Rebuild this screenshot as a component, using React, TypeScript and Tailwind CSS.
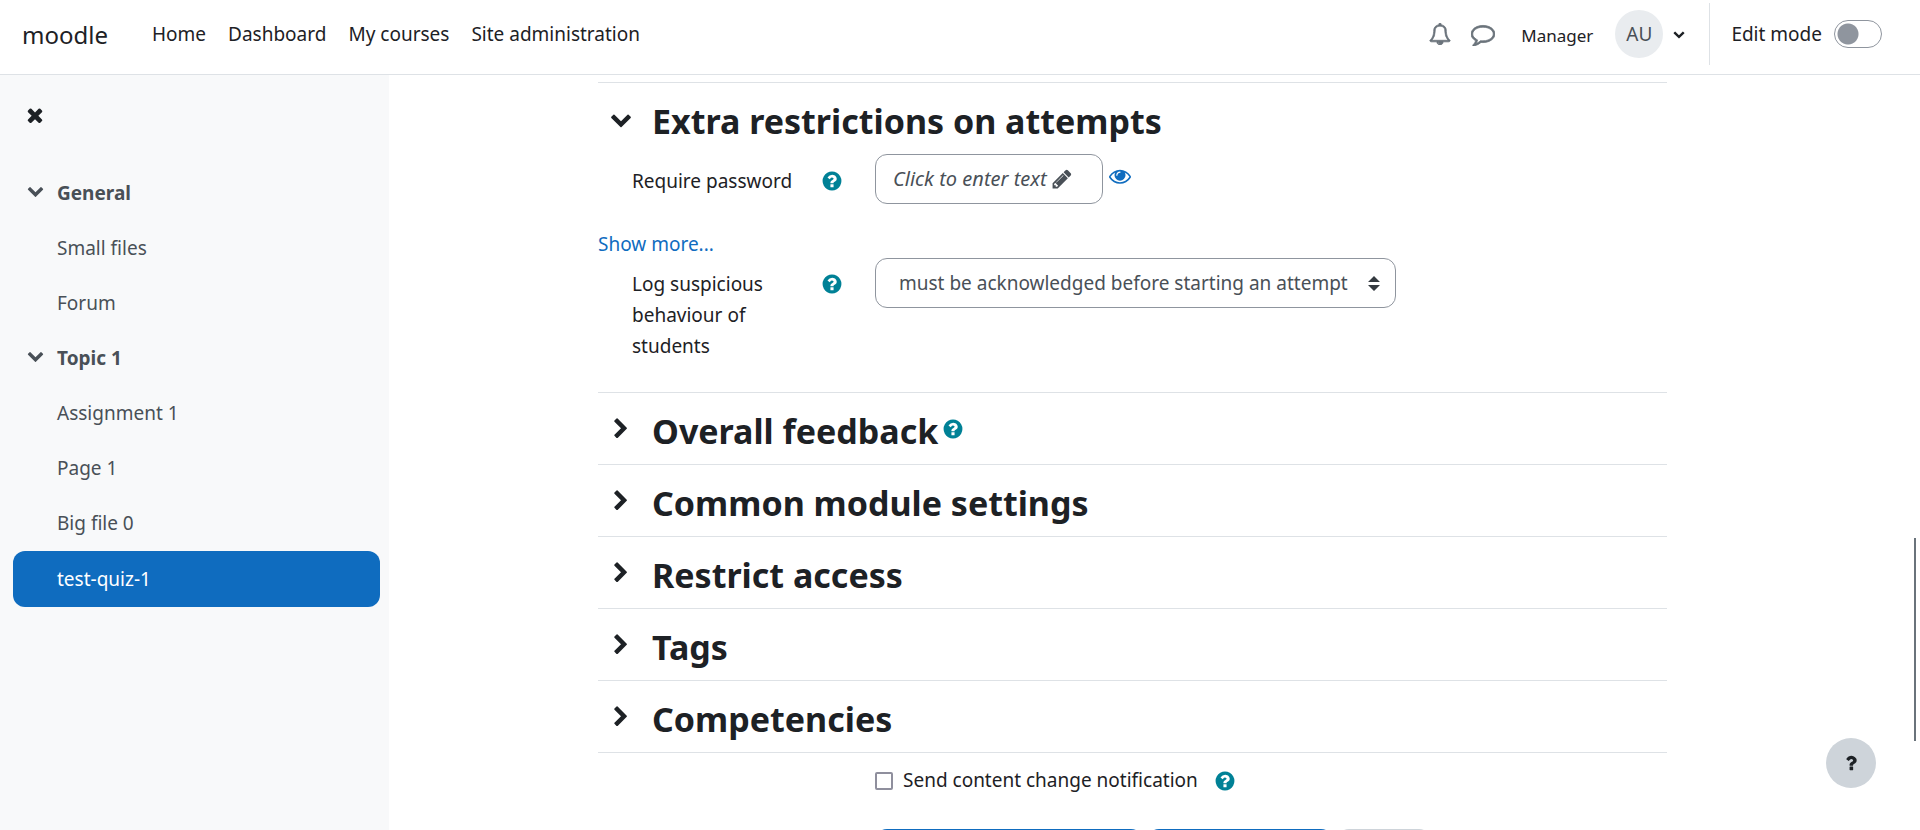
import type { ReactNode } from "react";

const PATHS = {
  chevronDown:
    "M1683 808l-742 741q-19 19-45 19t-45-19l-742-741q-19-19-19-45.5t19-45.5l166-165q19-19 45-19t45 19l531 531 531-531q19-19 45-19t45 19l166 165q19 19 19 45.5t-19 45.5z",
  chevronRight:
    "M1363 877l-742 742q-19 19-45 19t-45-19l-166-166q-19-19-19-45t19-45l531-531-531-531q-19-19-19-45t19-45l166-166q19-19 45-19t45 19l742 742q19 19 19 45t-19 45z",
  help: "M1024 1376v-192q0-14-9-23t-23-9h-192q-14 0-23 9t-9 23v192q0 14 9 23t23 9h192q14 0 23-9t9-23zm256-672q0-88-55.5-163t-138.5-116-170-41q-243 0-371 213-15 24 8 42l132 100q7 6 19 6 16 0 25-12 53-68 86-92 34-24 86-24 48 0 85.5 26t37.5 59q0 38-20 61t-68 45q-63 28-115.5 86.5t-52.5 125.5v36q0 14 9 23t23 9h192q14 0 23-9t9-23q0-19 21.5-49.5t54.5-49.5q32-18 49-28.5t46-35 44.5-48 28-60.5 12.5-81zm384 192q0 209-103 385.5t-279.5 279.5-385.5 103-385.5-103-279.5-279.5-103-385.5 103-385.5 279.5-279.5 385.5-103 385.5 103 279.5 279.5 103 385.5z",
  times:
    "M1490 1322q0 40-28 68l-136 136q-28 28-68 28t-68-28l-294-294-294 294q-28 28-68 28t-68-28l-136-136q-28-28-28-68t28-68l294-294-294-294q-28-28-28-68t28-68l136-136q28-28 68-28t68 28l294 294 294-294q28-28 68-28t68 28l136 136q28 28 28 68t-28 68l-294 294 294 294q28 28 28 68z",
  eye: "M1664 960q-152-236-381-353 61 104 61 225 0 185-131.5 316.5t-316.5 131.5-316.5-131.5-131.5-316.5q0-121 61-225-229 117-381 353 133 205 333.5 326.5t434.5 121.5 434.5-121.5 333.5-326.5zm-720-384q0-20-14-34t-34-14q-125 0-214.5 89.5t-89.5 214.5q0 20 14 34t34 14 34-14 14-34q0-86 61-147t147-61q20 0 34-14t14-34zm848 384q0 34-20 69-140 230-376.5 368.5t-499.5 138.5-499.5-139-376.5-368q-20-35-20-69t20-69q140-229 376.5-368t499.5-139 499.5 139 376.5 368q20 35 20 69z",
  pencil:
    "M491 1536l91-91-235-235-91 91v107h128v128h107zm523-928q0-22-22-22-10 0-17 7l-542 542q-7 7-7 17 0 22 22 22 10 0 17-7l542-542q7-7 7-17zm-54-192l416 416-832 832h-416v-416zm683 96q0 53-37 90l-166 166-416-416 166-165q36-38 90-38 53 0 91 38l235 234q37 39 37 91z",
  bell: "M912 1696q0-16-16-16-59 0-101.5-42.5t-42.5-101.5q0-16-16-16t-16 16q0 73 51.5 124.5t124.5 51.5q16 0 16-16zm-666-288h1300q-266-300-266-832 0-51-24-105t-69-103-121.5-80.5-169.5-31.5-169.5 31.5-121.5 80.5-69 103-24 105q0 532-266 832zm1482 0q0 52-38 90t-90 38h-448q0 106-75 181t-181 75-181-75-75-181h-448q-52 0-90-38t-38-90q50-42 91-88t85-119.5 74.5-158.5 50-206 19.5-260q0-152 117-282.5t307-158.5q-8-19-8-39 0-40 28-68t68-28 68 28 28 68q0 20-8 39 190 28 307 158.5t117 282.5q0 139 19.5 260t50 206 74.5 158.5 85 119.5 91 88z",
  comment:
    "M896 384q-204 0-381.5 69.5t-282 187.5-104.5 255q0 112 71.5 213.5t201.5 175.5l87 50-27 96q-24 91-70 172 152-63 275-171l43-38 57 6q69 8 130 8 204 0 381.5-69.5t282-187.5 104.5-255-104.5-255-282-187.5-381.5-69.5zm896 512q0 174-120 321.5t-326 233-450 85.5q-70 0-145-8-198 175-460 242-49 14-114 22h-5q-15 0-27-10.5t-16-27.5v-1q-3-4-.5-12t2-10 4.5-9.5l6-9 7-8.5 8-9q7-8 31-34.5t34.5-38 31-39.5 32.5-51 27-59 26-76q-157-89-247.5-220t-90.5-281q0-174 120-321.5t326-233 450-85.5 450 85.5 326 233 120 321.5z",
  question:
    "M1088 1256v240q0 16-12 28t-28 12h-240q-16 0-28-12t-12-28v-240q0-16 12-28t28-12h240q16 0 28 12t12 28zm316-600q0 54-15.5 101t-35 76.5-55 59.5-57.5 43.5-61 35.5q-41 23-68.5 65t-27.5 67q0 17-12 32.5t-28 15.5h-240q-15 0-25.5-18.5t-10.5-37.5v-45q0-83 65-156.5t143-108.5q59-27 84-56t25-76q0-42-46.5-74t-107.5-32q-65 0-108 29-35 25-107 115-13 16-31 16-12 0-25-8l-164-125q-13-10-15.5-25t5.5-28q160-266 464-266 80 0 161 31t146 83 106 127.5 41 158.5z",
};

function Icon({ name, className }: { name: keyof typeof PATHS; className: string }) {
  return (
    <svg viewBox="0 0 1792 1792" fill="currentColor" aria-hidden="true" className={`shrink-0 ${className}`}>
      <path d={PATHS[name]} />
    </svg>
  );
}

function Help({ topic }: { topic: string }) {
  return (
    <button type="button" aria-label={`Help with ${topic}`} className="flex shrink-0 text-[#008196]">
      <Icon name="help" className="size-[22px]" />
    </button>
  );
}

function NavGroup({ title, items, current }: { title: string; items: string[]; current?: string }) {
  return (
    <li>
      <button type="button" aria-expanded="true" className="flex h-[55px] w-full items-center font-bold">
        <span className="flex w-11 pb-1.5 pl-[14px]">
          <Icon name="chevronDown" className="size-[17px]" />
        </span>
        {title}
      </button>
      <ul>
        {items.map((item) => (
          <li key={item}>
            <a
              href="#"
              aria-current={item === current ? "page" : undefined}
              className={
                item === current
                  ? "flex h-14 items-center rounded-xl bg-[#0f6cbf] pl-11 text-white"
                  : "flex h-[55px] items-center pl-11"
              }
            >
              {item}
            </a>
          </li>
        ))}
      </ul>
    </li>
  );
}

function Section({ title, open = false, help = false, children }: { title: string; open?: boolean; help?: boolean; children?: ReactNode }) {
  return (
    <section className="border-b border-[#dee2e6]">
      <div className="flex h-[71px] items-center pt-1">
        <button type="button" aria-expanded={open} aria-label={title} className="flex w-[54px] shrink-0 pb-1 pl-3">
          <Icon name={open ? "chevronDown" : "chevronRight"} className="size-[22px]" />
        </button>
        <h3 className="text-[34px] leading-10 font-bold">{title}</h3>
        {help && (
          <span className="pb-1 pl-1">
            <Help topic={title} />
          </span>
        )}
      </div>
      {children}
    </section>
  );
}

export default function App() {
  return (
    <div className="flex h-screen flex-col overflow-hidden bg-white font-['Noto_Sans','Open_Sans',sans-serif] text-[19px] leading-[31px] text-[#1d2125]">
      <header className="flex h-[75px] shrink-0 items-center justify-between border-b border-[#dee2e6] pb-1.5 pl-[22px] pr-[38px]">
        <div className="flex items-center">
          <a href="#" className="pt-0.5 text-2xl">moodle</a>
          <nav aria-label="Main" className="flex gap-[22px] pl-11">
            <a href="#">Home</a>
            <a href="#">Dashboard</a>
            <a href="#">My courses</a>
            <a href="#">Site administration</a>
          </nav>
        </div>
        <div className="flex items-center">
          <button type="button" aria-label="Notifications" className="flex text-[#6a737b]">
            <Icon name="bell" className="size-[22px] stroke-current stroke-[60]" />
          </button>
          <button type="button" aria-label="Messages" className="ml-5 flex text-[#6a737b]">
            <Icon name="comment" className="size-6 stroke-current stroke-[60]" />
          </button>
          <button type="button" className="ml-[26px] flex items-center">
            <span className="pt-0.5 text-[17px]">Manager</span>
            <span className="ml-[22px] flex size-12 items-center justify-center rounded-full bg-[#e9ecef] text-[#495057]">AU</span>
            <Icon name="chevronDown" className="ml-[10px] size-3" />
          </button>
          <label className="ml-6 flex h-[62px] items-center gap-3 border-l border-[#dee2e6] pl-[21px]">
            Edit mode
            <input
              type="checkbox"
              role="switch"
              className="h-7 w-12 appearance-none rounded-full border border-[#8f959e] bg-[radial-gradient(circle_at_13px_13px,#8f959e_10px,transparent_11px)]"
            />
          </label>
        </div>
      </header>

      <div className="flex min-h-0 flex-1">
        <aside className="w-[389px] shrink-0 bg-[#f8f9fa] px-[13px] pt-[29px] text-[#495057]">
          <button type="button" aria-label="Close course index" className="flex pl-[11px] text-[#1d2125]">
            <Icon name="times" className="size-[22px]" />
          </button>
          <nav aria-label="Course index" className="w-[367px] pt-10">
            <ul>
              <NavGroup title="General" items={["Small files", "Forum"]} />
              <NavGroup title="Topic 1" items={["Assignment 1", "Page 1", "Big file 0", "test-quiz-1"]} current="test-quiz-1" />
            </ul>
          </nav>
        </aside>

        <main className="flex min-w-0 flex-1 justify-center overflow-hidden pr-11 pt-[7px]">
          <form className="w-full max-w-[1069px]">
            <div className="border-t border-[#dee2e6]" />
            <Section title="Extra restrictions on attempts" open>
              <div className="flex pl-[34px]">
                <span className="w-[189px] shrink-0 pt-3">Require password</span>
                <span className="w-[54px] shrink-0 pt-4">
                  <Help topic="Require password" />
                </span>
                <button
                  type="button"
                  className="flex h-[50px] w-[228px] items-center rounded-xl border border-[#8f959e] pl-[17px] text-xl italic text-[#495057]"
                >
                  Click to enter text
                  <Icon name="pencil" className="ml-1 size-[22px]" />
                </button>
                <button type="button" aria-label="Reveal" className="ml-1.5 mt-[11px] flex self-start text-[#0f6cbf]">
                  <Icon name="eye" className="size-[22px]" />
                </button>
              </div>
              <a href="#" className="mt-[25px] block text-[#0f6cbf]">Show more...</a>
              <div className="-mt-0.5 flex pl-[34px] pb-[30px]">
                <label htmlFor="log" className="w-[189px] shrink-0 pr-8 pt-[11px]">
                  Log suspicious behaviour of students
                </label>
                <span className="w-[54px] shrink-0 pt-[15px]">
                  <Help topic="Log suspicious behaviour of students" />
                </span>
                <div className="grid w-[521px] self-start">
                  <select
                    id="log"
                    className="col-start-1 row-start-1 h-[50px] appearance-none rounded-xl border border-[#8f959e] bg-white pl-[23px] text-[#495057]"
                  >
                    <option>must be acknowledged before starting an attempt</option>
                  </select>
                  <svg viewBox="0 0 4 5" aria-hidden="true" className="pointer-events-none col-start-1 row-start-1 mr-4 h-[15px] w-3 self-center justify-self-end">
                    <path fill="#343a40" d="M2 0L0 2h4zm0 5L0 3h4z" />
                  </svg>
                </div>
              </div>
            </Section>
            <Section title="Overall feedback" help />
            <Section title="Common module settings" />
            <Section title="Restrict access" />
            <Section title="Tags" />
            <Section title="Competencies" />
            <div className="flex items-center pl-[277px] pt-3">
              <input id="notify" type="checkbox" className="size-[18px] appearance-none rounded-xs border-2 border-[#8f8f9d] bg-white" />
              <label htmlFor="notify" className="ml-2.5">Send content change notification</label>
              <span className="ml-4">
                <Help topic="Send content change notification" />
              </span>
            </div>
            <div className="flex gap-1 pl-[277px] pt-[33px]">
              <button type="button" className="h-[50px] w-[268px] shrink-0 rounded-xl bg-[#0f6cbf]" aria-label="Save and return to course" />
              <button type="button" className="h-[50px] w-[186px] shrink-0 rounded-xl bg-[#0f6cbf]" aria-label="Save and display" />
              <button type="button" className="h-[50px] w-[94px] shrink-0 rounded-xl bg-[#ced4da]" aria-label="Cancel" />
            </div>
          </form>
        </main>
      </div>

      <button
        type="button"
        aria-label="Show footer"
        className="fixed bottom-[42px] right-11 flex size-[50px] items-center justify-center rounded-full bg-[#ced4da]"
      >
        <Icon name="question" className="size-5" />
      </button>
      <div className="fixed right-1 top-[538px] h-[203px] w-0.5 bg-[#6a737b]" />
    </div>
  );
}
